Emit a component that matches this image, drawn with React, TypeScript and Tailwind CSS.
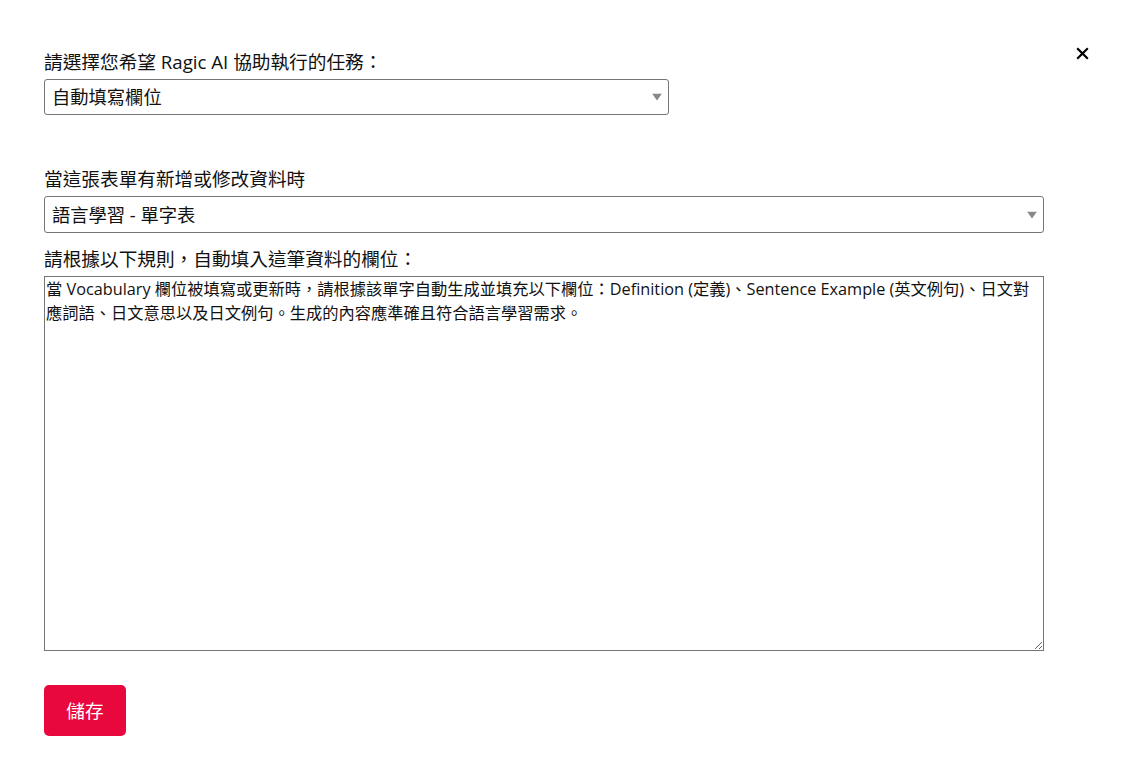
import React from "react";

const Arrow: React.FC = () => (
  <svg
    width="10"
    height="7"
    viewBox="0 0 10 7"
    className="pointer-events-none absolute right-[7px] top-1/2 -translate-y-1/2"
  >
    <path d="M0 0 H10 L5 7 Z" fill="#888" />
  </svg>
);

const App: React.FC = () => {
  const rule =
    "當 Vocabulary 欄位被填寫或更新時，請根據該單字自動生成並填充以下欄位：Definition (定義)、Sentence Example (英文例句)、日文對應詞語、日文意思以及日文例句。生成的內容應準確且符合語言學習需求。";

  return (
    <div
      className="relative min-h-[765px] w-[1125px] bg-white pl-[44px] pt-[48px] text-[#111]"
      style={{ fontFamily: '"Open Sans", "Noto Sans CJK TC", sans-serif' }}
    >
      <button
        type="button"
        className="absolute right-[32px] top-[42px] flex h-[22px] w-[22px] items-center justify-center"
      >
        <svg width="13" height="13" viewBox="0 0 13 13">
          <path d="M1.2 1.2 L11.8 11.8 M11.8 1.2 L1.2 11.8" stroke="#000" strokeWidth="2.2" />
        </svg>
      </button>

      <label className="mb-[3px] block text-[18.67px] leading-[28px]">
        請選擇您希望 Ragic AI 協助執行的任務：
      </label>
      <div className="relative w-[625px]">
        <select
          className="h-[36px] w-full appearance-none rounded-[3px] border border-[#767676] bg-white pl-[7px] text-[18.3px] outline-none"
          defaultValue="a"
        >
          <option value="a">自動填寫欄位</option>
        </select>
        <Arrow />
      </div>

      <label className="mb-[3px] mt-[50px] block text-[18.67px] leading-[28px]">
        當這張表單有新增或修改資料時
      </label>
      <div className="relative w-[1000px]">
        <select
          className="h-[37px] w-full appearance-none rounded-[3px] border border-[#767676] bg-white pl-[7px] text-[18.3px] outline-none"
          defaultValue="b"
        >
          <option value="b">語言學習 - 單字表</option>
        </select>
        <Arrow />
      </div>

      <label className="mb-[3px] mt-[12px] block text-[18.67px] leading-[28px]">
        請根據以下規則，自動填入這筆資料的欄位：
      </label>
      <textarea
        className="block h-[375px] w-[1000px] resize-y border border-[#767676] py-[1px] pl-[1px] pr-[3px] text-[16.25px] leading-[23.5px] outline-none"
        defaultValue={rule}
      />

      <button
        type="button"
        className="mt-[34px] h-[51px] w-[82px] rounded-[5px] bg-[#e8083e] text-[18.67px] text-white"
      >
        儲存
      </button>
    </div>
  );
};

export default App;
